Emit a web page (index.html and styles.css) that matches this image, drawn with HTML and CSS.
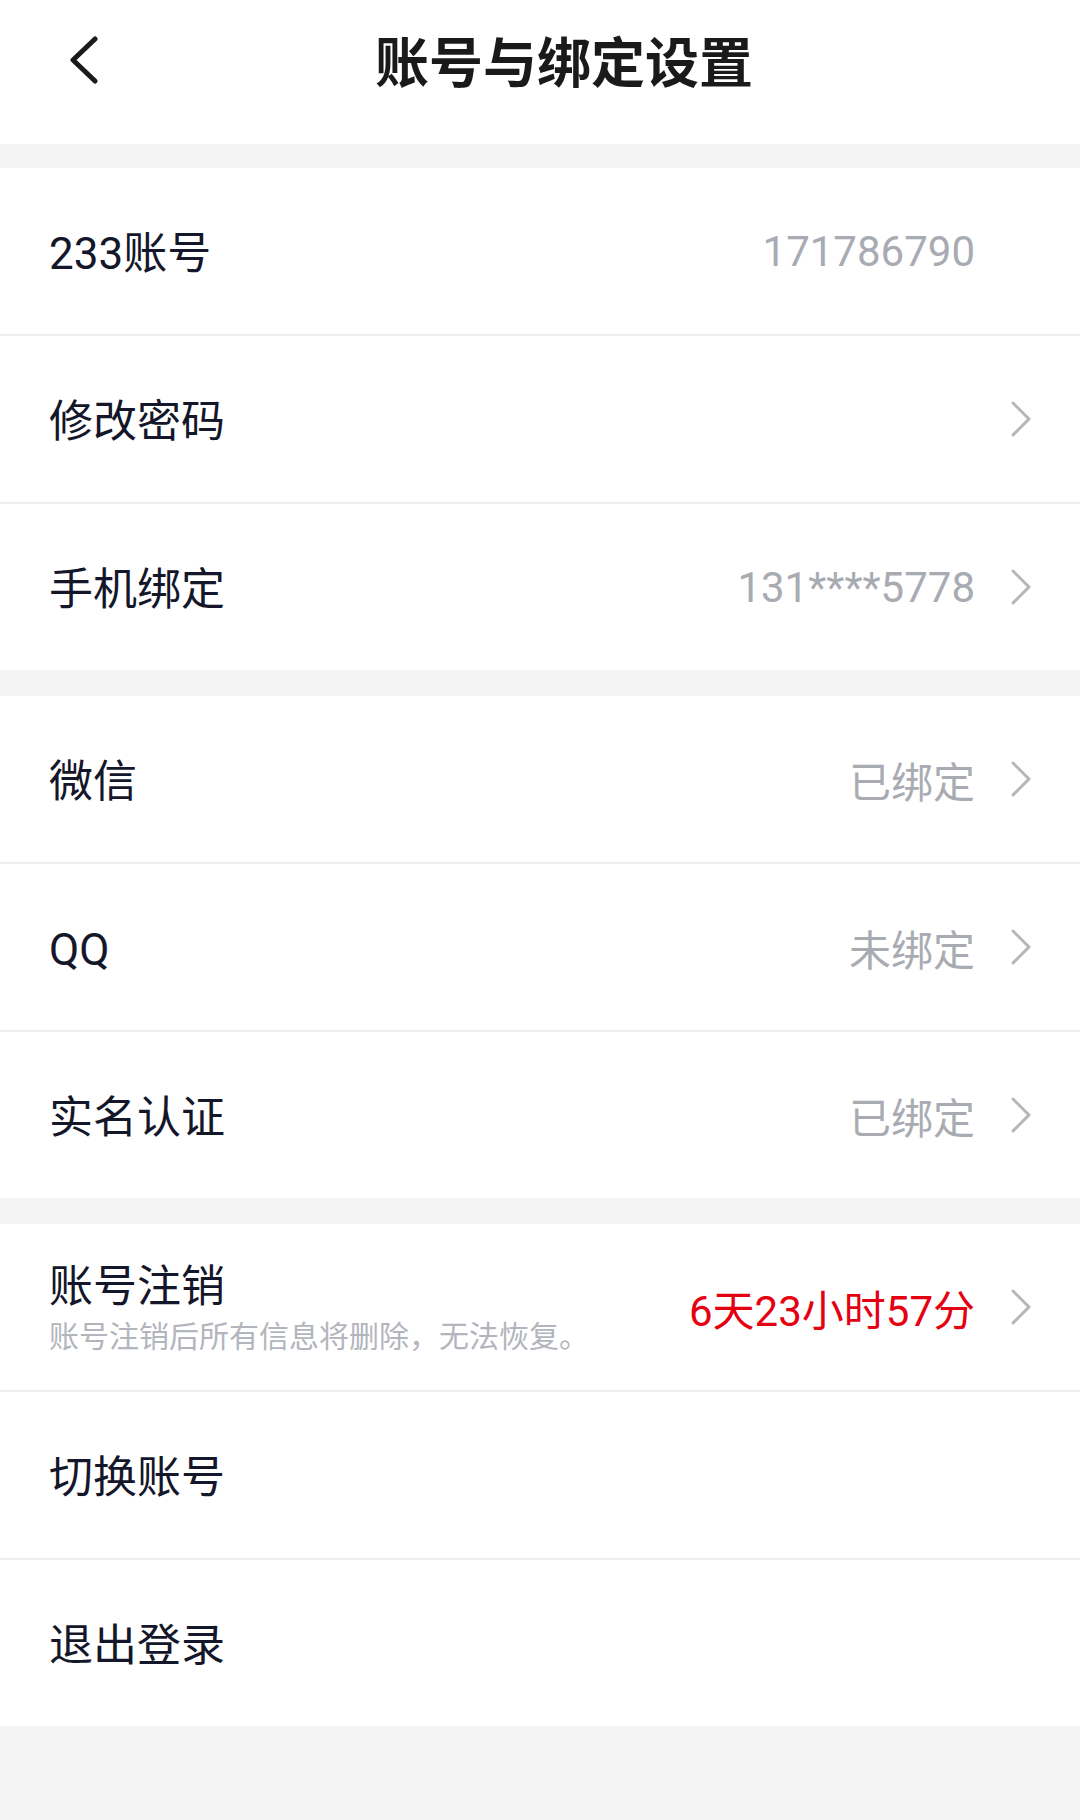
FILE: index.html
```html
<!doctype html>
<html>
  <head>
    <meta charset="utf-8">
    <title>账号与绑定设置</title>
    <meta name="viewport" content="width=device-width,minimum-scale=1,initial-scale=1">
    <link rel="stylesheet" href="styles.css">
  </head>
  <body>
    <header class="topbar">
      <a class="back" href="#">
        <svg width="30" height="48" viewBox="0 0 30 48">
          <polyline points="26,3 4,24 26,45" fill="none" stroke="#1a1a1a" stroke-width="5" stroke-linecap="round" stroke-linejoin="round"/>
        </svg>
      </a>
      <h1>账号与绑定设置</h1>
    </header>

    <section class="group">
      <div class="row">
        <span class="label">233账号</span>
        <span class="value">171786790</span>
        <span class="arrow-space"></span>
      </div>
      <div class="row">
        <span class="label">修改密码</span>
        <span class="value"></span>
        <svg class="arrow" width="22" height="38" viewBox="0 0 22 38"><polyline points="3,3 19,19 3,35"/></svg>
      </div>
      <div class="row">
        <span class="label">手机绑定</span>
        <span class="value">131****5778</span>
        <svg class="arrow" width="22" height="38" viewBox="0 0 22 38"><polyline points="3,3 19,19 3,35"/></svg>
      </div>
    </section>

    <section class="group">
      <div class="row">
        <span class="label">微信</span>
        <span class="value">已绑定</span>
        <svg class="arrow" width="22" height="38" viewBox="0 0 22 38"><polyline points="3,3 19,19 3,35"/></svg>
      </div>
      <div class="row">
        <span class="label">QQ</span>
        <span class="value">未绑定</span>
        <svg class="arrow" width="22" height="38" viewBox="0 0 22 38"><polyline points="3,3 19,19 3,35"/></svg>
      </div>
      <div class="row">
        <span class="label">实名认证</span>
        <span class="value">已绑定</span>
        <svg class="arrow" width="22" height="38" viewBox="0 0 22 38"><polyline points="3,3 19,19 3,35"/></svg>
      </div>
    </section>

    <section class="group">
      <div class="row">
        <div class="label-block">
          <div class="label">账号注销</div>
          <div class="hint">账号注销后所有信息将删除，无法恢复。</div>
        </div>
        <span class="value countdown">6天23小时57分</span>
        <svg class="arrow" width="22" height="38" viewBox="0 0 22 38"><polyline points="3,3 19,19 3,35"/></svg>
      </div>
      <div class="row">
        <span class="label">切换账号</span>
      </div>
      <div class="row">
        <span class="label">退出登录</span>
      </div>
    </section>
  </body>
</html>
```

FILE: styles.css
```css
body {
  margin: 0px;
  background: #f4f4f4;
  font-family: Roboto, "Noto Sans CJK SC", sans-serif;
  color: #14162a;
}

.topbar {
  display: flex;
  align-items: center;
  height: 144px;
  box-sizing: border-box;
  padding: 0 51px 24px 69px;
  background: #ffffff;
}

.back {
  display: flex;
  width: 30px;
}

.topbar h1 {
  flex: 1;
  margin: 0;
  text-align: center;
  font-family: "Noto Sans CJK SC", sans-serif;
  font-size: 54px;
  font-weight: 700;
  line-height: 60px;
  color: #1a1a1a;
}

.group {
  background: #ffffff;
  margin-bottom: 26px;
}

.topbar + .group {
  margin-top: 24px;
}

.row {
  display: flex;
  align-items: center;
  height: 166px;
  padding: 0 48px 0 49px;
  border-bottom: 2px solid #ededed;
}

.row:last-child {
  border-bottom: none;
}

.label {
  padding-top: 6px;
  font-size: 44px;
  line-height: 52px;
  color: #14162a;
}

.label-block {
  display: flex;
  flex-direction: column;
}

.label-block .label {
  padding-top: 4px;
}

.hint {
  margin-top: 4px;
  font-size: 30px;
  line-height: 40px;
  color: #b3b5bc;
}

.value {
  flex: 1;
  text-align: right;
  font-size: 42px;
  color: #a9abb2;
}

.value.countdown {
  color: #e50012;
}

.arrow {
  margin-left: 35px;
  fill: none;
  stroke: #b6b6ba;
  stroke-width: 3;
  stroke-linecap: round;
  stroke-linejoin: round;
}

.arrow-space {
  width: 22px;
  margin-left: 35px;
}
```
